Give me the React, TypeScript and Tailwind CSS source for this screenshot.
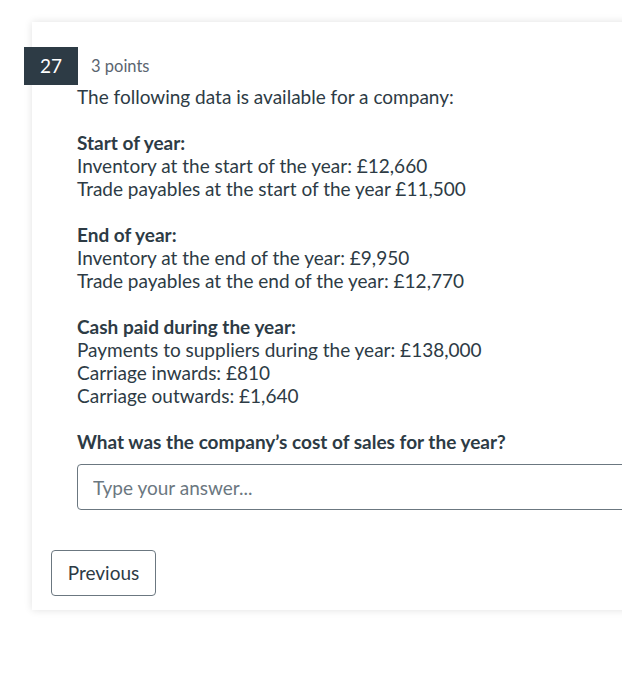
export default function App() {
  const font = { fontFamily: "Lato, 'Open Sans', sans-serif" };

  return (
    <div className="w-[622px] h-[676px] overflow-hidden bg-white" style={font}>
      <div className="ml-[32px] mt-[22px] w-[700px] bg-white shadow-[0_0_8px_rgba(0,0,0,0.12)] pt-[25px] pb-[14px]">
        <div className="flex items-center -ml-[8px]">
          <div className="w-[54px] h-[38px] bg-[#2d3b45] text-white text-[19px] flex items-center justify-center">27</div>
          <span className="ml-[13px] text-[16.5px] text-[#5a6570]">3 points</span>
        </div>
        <div className="pl-[45px] text-[19px] leading-[23px] text-[#2d3b45]">
          <p>The following data is available for a company:</p>
          <br />
          <p className="font-bold">Start of year:</p>
          <p>Inventory at the start of the year: £12,660</p>
          <p>Trade payables at the start of the year £11,500</p>
          <br />
          <p className="font-bold">End of year:</p>
          <p>Inventory at the end of the year: £9,950</p>
          <p>Trade payables at the end of the year: £12,770</p>
          <br />
          <p className="font-bold">Cash paid during the year:</p>
          <p>Payments to suppliers during the year: £138,000</p>
          <p>Carriage inwards: £810</p>
          <p>Carriage outwards: £1,640</p>
          <br />
          <p className="font-bold">What was the company’s cost of sales for the year?</p>
          <input
            type="text"
            placeholder="Type your answer..."
            className="mt-[11px] w-[600px] h-[46px] border border-[#6b7780] rounded-[4px] px-[15px] text-[19px] placeholder:text-[#6b7780] outline-none"
          />
        </div>
        <div className="pl-[19px] mt-[40px]">
          <button className="h-[46px] w-[105px] border border-[#6b7780] rounded-[4px] text-[19px] text-[#2d3b45] bg-white">Previous</button>
        </div>
      </div>
    </div>
  );
}
